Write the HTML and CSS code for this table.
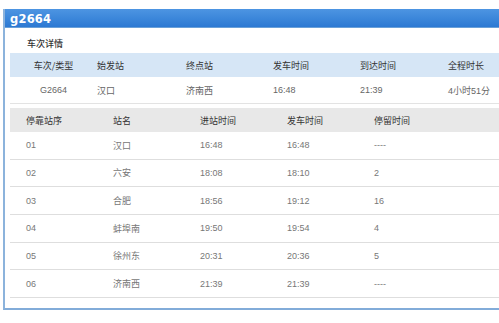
FILE: index.html
```html
<!DOCTYPE html>
<html lang="zh">
<head>
<meta charset="utf-8">
<title>g2664</title>
<link rel="stylesheet" href="styles.css">
</head>
<body>
<div class="panel">
  <div class="panel-head">g2664</div>
  <div class="panel-body">
    <div class="section-title">车次详情</div>
    <div class="info">
      <div class="info-row info-head">
        <div class="c1">车次/类型</div>
        <div>始发站</div>
        <div>终点站</div>
        <div>发车时间</div>
        <div>到达时间</div>
        <div>全程时长</div>
      </div>
      <div class="info-row info-data">
        <div class="c1">G2664</div>
        <div>汉口</div>
        <div>济南西</div>
        <div>16:48</div>
        <div>21:39</div>
        <div>4小时51分</div>
      </div>
    </div>
    <div class="stops">
      <div class="stop-row stop-head">
        <div>停靠站序</div>
        <div>站名</div>
        <div>进站时间</div>
        <div>发车时间</div>
        <div>停留时间</div>
      </div>
      <div class="stop-row"><div>01</div><div>汉口</div><div>16:48</div><div>16:48</div><div>----</div></div>
      <div class="stop-row"><div>02</div><div>六安</div><div>18:08</div><div>18:10</div><div>2</div></div>
      <div class="stop-row"><div>03</div><div>合肥</div><div>18:56</div><div>19:12</div><div>16</div></div>
      <div class="stop-row"><div>04</div><div>蚌埠南</div><div>19:50</div><div>19:54</div><div>4</div></div>
      <div class="stop-row"><div>05</div><div>徐州东</div><div>20:31</div><div>20:36</div><div>5</div></div>
      <div class="stop-row"><div>06</div><div>济南西</div><div>21:39</div><div>21:39</div><div>----</div></div>
    </div>
  </div>
</div>
</body>
</html>
```

FILE: styles.css
```css
html, body {
  margin: 0;
  padding: 0;
  background: #ffffff;
  overflow: hidden;
}

body {
  font-family: "Liberation Sans", "Noto Sans CJK SC", sans-serif;
  font-size: 9px;
  color: #666;
}

.panel {
  margin: 9px 0 0 3px;
  width: 496px;
  box-sizing: border-box;
  border-left: 2px solid #8cb3dc;
  border-bottom: 2px solid #82acd9;
  background: #fff;
}

.panel-head {
  height: 19px;
  line-height: 20px;
  padding-left: 5px;
  background: linear-gradient(#4d95e2, #2c79d3);
  border-bottom: 1px solid #6aa0d8;
  box-sizing: border-box;
  color: #fff;
  font-family: "DejaVu Sans", sans-serif;
  font-weight: bold;
  font-size: 11.5px;
  letter-spacing: 0.2px;
}

.panel-body {
  padding: 0 0 10px 5px;
}

.section-title {
  height: 25px;
  line-height: 12px;
  padding: 10px 0 0 17px;
  box-sizing: border-box;
  color: #333;
  font-size: 9px;
  font-weight: 500;
  font-family: "Noto Sans CJK SC", sans-serif;
}

.info-row {
  display: grid;
  grid-template-columns: 87px 89px 87px 87px 88px 1fr;
  align-items: center;
}

.info-row .c1 {
  text-align: center;
}

.info-head {
  height: 24px;
  background: #d6e6f6;
  color: #333;
  font-family: "Noto Sans CJK SC", sans-serif;
}

.info-data {
  height: 26px;
  color: #666;
  border-bottom: 1px solid #e3e3e3;
}

.stops {
  margin-top: 4px;
}

.stop-row {
  display: grid;
  grid-template-columns: 87px 87px 87px 87px 1fr;
  align-items: center;
  height: 27.67px;
  box-sizing: border-box;
  border-bottom: 1px solid #dedede;
  color: #777;
}

.stop-row > div {
  padding-left: 16px;
}

.stop-head {
  height: 24px;
  background: #e8e8e8;
  border-bottom: none;
  color: #333;
  font-family: "Noto Sans CJK SC", sans-serif;
}
```
